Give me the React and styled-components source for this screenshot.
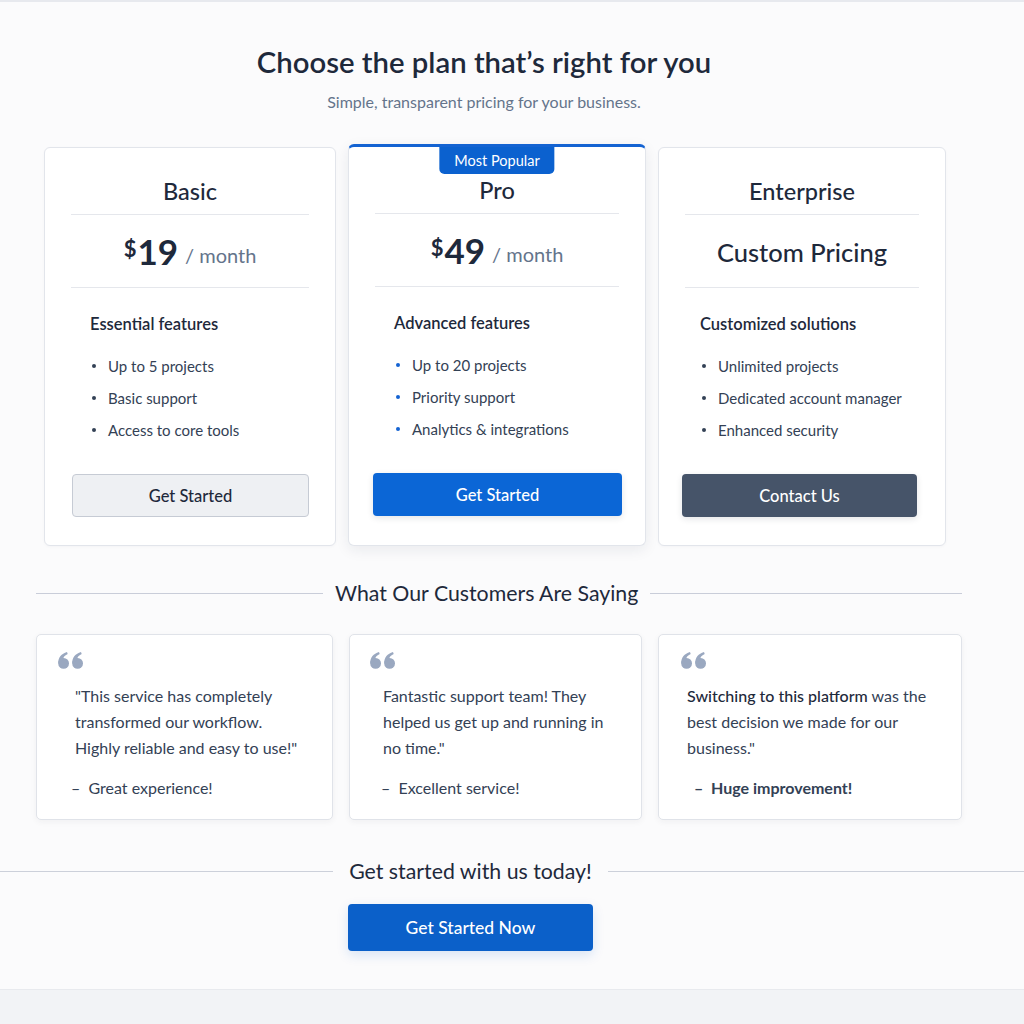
import React from 'react'
import styled, { createGlobalStyle } from 'styled-components'

const GlobalStyle = createGlobalStyle`
  body {
    margin: 0;
    background: #fbfbfc;
    font-family: Lato, "Noto Sans", sans-serif;
    color: #1e293b;
  }
`

const Page = styled.div`
  min-height: 1024px;
  display: flex;
  flex-direction: column;
  border-top: 2px solid #e7e9ee;
  box-sizing: border-box;
`

const Main = styled.main`
  flex-grow: 1;
  padding-top: 40px;
`

const Content = styled.div`
  width: 926px;
  margin-left: 36px;
`

const Header = styled.header`
  text-align: center;
  padding-right: 30px;
`

const Title = styled.h1`
  margin: 0;
  font-size: 29.3px;
  line-height: 40px;
  font-weight: 600;
  color: #1e293b;
`

const Subtitle = styled.p`
  margin: 10px 0 0;
  font-size: 16px;
  line-height: 20px;
  color: #64748b;
`

const Plans = styled.div`
  display: grid;
  grid-template-columns: 292px 298px 288px;
  gap: 12px;
  padding-left: 8px;
  margin-top: 35px;
`

const PlanCard = styled.div`
  position: relative;
  background: #fff;
  border: 1px solid #e2e5eb;
  border-top: ${p => (p.$featured ? '3px solid #1463d2' : '1px solid #e2e5eb')};
  border-radius: 6px;
  margin-top: ${p => (p.$featured ? '-3px' : '0')};
  box-shadow: ${p => (p.$featured ? '0 4px 14px rgba(30, 41, 59, 0.08)' : '0 1px 3px rgba(30, 41, 59, 0.03)')};
  padding: 29px 0 28px;
  display: flex;
  flex-direction: column;
`

const Badge = styled.div`
  position: absolute;
  top: 0;
  left: 50%;
  transform: translateX(-50%);
  background: #0b61cf;
  color: #fff;
  font-size: 14.5px;
  line-height: 27px;
  padding: 0 15px;
  border-radius: 0 0 5px 5px;
  white-space: nowrap;
`

const PlanName = styled.h2`
  margin: 0 26px;
  padding-bottom: 9px;
  border-bottom: 1px solid #e5e7ec;
  font-size: 23.5px;
  line-height: 28px;
  font-weight: 500;
  text-align: center;
`

const PriceRow = styled.div`
  margin: 0 26px;
  height: 72px;
  border-bottom: 1px solid #e5e7ec;
  display: flex;
  align-items: center;
  justify-content: center;
`

const Currency = styled.span`
  font-size: 22px;
  font-weight: 700;
  align-self: flex-start;
  margin-top: 20px;
`

const Amount = styled.span`
  font-size: 35px;
  font-weight: 700;
  margin-left: 1px;
`

const Period = styled.span`
  font-size: 20px;
  color: #64748b;
  margin-left: 7px;
  margin-top: 8px;
`

const CustomPrice = styled.span`
  font-size: 25.5px;
  font-weight: 500;
  margin-top: 2px;
`

const Features = styled.div`
  padding: 26px 0 0 ${p => p.$indent}px;
`

const FeatureHeading = styled.h3`
  margin: 0;
  font-size: 16.5px;
  line-height: 20px;
  font-weight: 600;
`

const FeatureList = styled.ul`
  list-style: none;
  margin: 22px 0 0;
  padding: 0;
  display: flex;
  flex-direction: column;
  gap: 12px;
`

const FeatureItem = styled.li`
  display: flex;
  align-items: center;
  font-size: 15px;
  line-height: 20px;
  color: #334155;

  &::before {
    content: '';
    width: 4px;
    height: 4px;
    border-radius: 50%;
    background: ${p => (p.$accent ? '#1463d2' : '#334155')};
    margin: 0 12px 0 2px;
  }
`

const PlanButton = styled.button`
  margin: 34px ${p => p.$inset[1]}px 0 ${p => p.$inset[0]}px;
  height: 43px;
  border-radius: 4px;
  font-family: inherit;
  font-size: 16.5px;
  font-weight: 500;
  cursor: pointer;
  border: 1px solid ${p => (p.$variant === 'light' ? '#c6cbd4' : 'transparent')};
  color: ${p => (p.$variant === 'light' ? '#1e293b' : '#fff')};
  background: ${p =>
    p.$variant === 'light' ? '#eef0f3' : p.$variant === 'dark' ? '#465469' : '#0b66d6'};
  box-shadow: ${p => (p.$variant === 'light' ? 'none' : '0 2px 6px rgba(30, 41, 59, 0.12)')};
`

const SectionHeading = styled.div`
  display: grid;
  grid-template-columns: 287px auto 1fr;
  align-items: center;
  gap: 12px;
  margin-top: 34px;

  &::before,
  &::after {
    content: '';
    height: 1px;
    background: #c9cdd9;
  }
`

const SectionTitle = styled.h2`
  margin: 0;
  font-size: 21.3px;
  line-height: 26px;
  font-weight: 400;
  white-space: nowrap;
`

const Testimonials = styled.div`
  display: grid;
  grid-template-columns: 297px 293px 1fr;
  gap: 16px;
  margin-top: 28px;
`

const TestimonialCard = styled.div`
  background: #fff;
  border: 1px solid #e0e3e9;
  border-radius: 5px;
  box-shadow: 0 2px 6px rgba(30, 41, 59, 0.05);
  padding: 17px 16px 20px ${p => p.$pad}px;
  height: 186px;
  box-sizing: border-box;
`

const QuoteMark = styled.svg`
  display: block;
  width: 26px;
  height: 17px;
  fill: #9aa8c0;
`

const Quote = styled.p`
  margin: 14px 0 0 ${p => p.$indent}px;
  max-width: ${p => p.$width}px;
  font-size: 16px;
  line-height: 26px;
  color: #334155;
`

const Strong = styled.span`
  font-weight: 500;
  color: #1e293b;
`

const Author = styled.p`
  margin: 14px 0 0 ${p => p.$indent}px;
  font-size: 16px;
  line-height: 26px;
  color: #334155;
  font-weight: ${p => (p.$bold ? 700 : 400)};
`

const Cta = styled.section`
  display: grid;
  grid-template-columns: 333px auto 1fr;
  column-gap: 15px;
  row-gap: 20px;
  align-items: center;
  margin-top: 38px;
  padding-bottom: 36px;
`

const CtaLine = styled.div`
  height: 1px;
  background: #ccd0da;
`

const CtaTitle = styled.h2`
  margin: 0;
  font-size: 21.3px;
  line-height: 26px;
  font-weight: 400;
  text-align: center;
  white-space: nowrap;
`

const CtaButton = styled.button`
  grid-column: 2;
  justify-self: center;
  width: 245px;
  height: 47px;
  border: none;
  border-radius: 4px;
  background: #0b60c9;
  color: #fff;
  font-family: inherit;
  font-size: 17.5px;
  font-weight: 500;
  box-shadow: 0 4px 12px rgba(11, 96, 201, 0.15);
  cursor: pointer;
`

const Footer = styled.footer`
  height: 34px;
  background: #f2f3f6;
  border-top: 1px solid #e8eaee;
`

const plans = [
  {
    name: 'Basic',
    price: '19',
    heading: 'Essential features',
    features: ['Up to 5 projects', 'Basic support', 'Access to core tools'],
    button: 'Get Started',
    variant: 'light',
    indent: 45,
    inset: [27, 26],
  },
  {
    name: 'Pro',
    price: '49',
    featured: true,
    heading: 'Advanced features',
    features: ['Up to 20 projects', 'Priority support', 'Analytics & integrations'],
    button: 'Get Started',
    variant: 'primary',
    indent: 45,
    inset: [24, 23],
  },
  {
    name: 'Enterprise',
    heading: 'Customized solutions',
    features: ['Unlimited projects', 'Dedicated account manager', 'Enhanced security'],
    button: 'Contact Us',
    variant: 'dark',
    indent: 41,
    inset: [23, 28],
  },
]

const QuoteIcon = () => (
  <QuoteMark viewBox="0 0 26 17">
    <circle cx="5.6" cy="11.4" r="5.4" />
    <path d="M0.2 11.2C0.2 5.6 3.4 1.6 9 0l0.7 1.9C6.6 3.2 5 5.4 4.9 8.2z" />
    <circle cx="19.6" cy="11.4" r="5.4" />
    <path d="M14.2 11.2C14.2 5.6 17.4 1.6 23 0l0.7 1.9C20.6 3.2 19 5.4 18.9 8.2z" />
  </QuoteMark>
)

const App = () => {
  return (
    <Page>
      <GlobalStyle />
      <Main>
        <Content>
          <Header>
            <Title>Choose the plan that’s right for you</Title>
            <Subtitle>Simple, transparent pricing for your business.</Subtitle>
          </Header>

          <Plans>
            {plans.map(plan => (
              <PlanCard key={plan.name} $featured={plan.featured}>
                {plan.featured && <Badge>Most Popular</Badge>}
                <PlanName>{plan.name}</PlanName>
                <PriceRow>
                  {plan.price ? (
                    <>
                      <Currency>$</Currency>
                      <Amount>{plan.price}</Amount>
                      <Period>/ month</Period>
                    </>
                  ) : (
                    <CustomPrice>Custom Pricing</CustomPrice>
                  )}
                </PriceRow>
                <Features $indent={plan.indent}>
                  <FeatureHeading>{plan.heading}</FeatureHeading>
                  <FeatureList>
                    {plan.features.map(f => (
                      <FeatureItem key={f} $accent={plan.featured}>{f}</FeatureItem>
                    ))}
                  </FeatureList>
                </Features>
                <PlanButton $variant={plan.variant} $inset={plan.inset}>{plan.button}</PlanButton>
              </PlanCard>
            ))}
          </Plans>

          <SectionHeading>
            <SectionTitle>What Our Customers Are Saying</SectionTitle>
          </SectionHeading>

          <Testimonials>
            <TestimonialCard $pad={21}>
              <QuoteIcon />
              <Quote $indent={17} $width={234}>
                "This service has completely transformed our workflow. Highly reliable and easy to use!"
              </Quote>
              <Author $indent={13}>–&nbsp; Great experience!</Author>
            </TestimonialCard>
            <TestimonialCard $pad={20}>
              <QuoteIcon />
              <Quote $indent={13} $width={222}>
                Fantastic support team! They helped us get up and running in no time."
              </Quote>
              <Author $indent={11}>–&nbsp; Excellent service!</Author>
            </TestimonialCard>
            <TestimonialCard $pad={22}>
              <QuoteIcon />
              <Quote $indent={6} $width={252}>
                <Strong>Switching to this platform</Strong> was the best decision we made for our business."
              </Quote>
              <Author $bold $indent={13}>–&nbsp; Huge improvement!</Author>
            </TestimonialCard>
          </Testimonials>
        </Content>

        <Cta>
          <CtaLine />
          <CtaTitle>Get started with us today!</CtaTitle>
          <CtaLine />
          <CtaButton>Get Started Now</CtaButton>
        </Cta>
      </Main>
      <Footer />
    </Page>
  )
}

export default App
